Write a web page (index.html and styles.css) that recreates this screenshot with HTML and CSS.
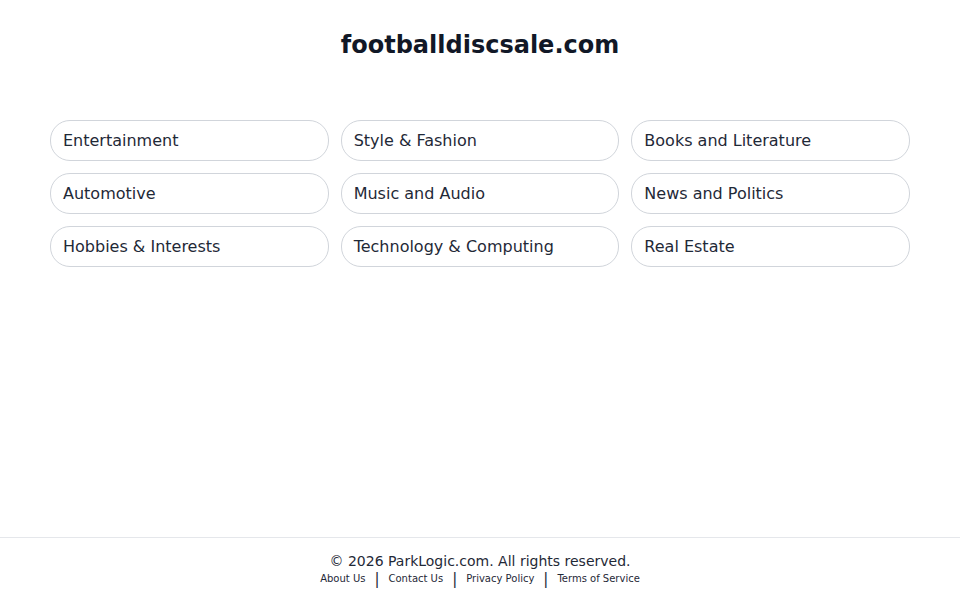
FILE: index.html
```html
<!DOCTYPE html>
<html lang="en">
<head>
<meta charset="utf-8">
<title>footballdiscsale.com</title>
<link rel="stylesheet" href="styles.css">
</head>
<body>
<div class="page">
  <header class="header">
    <h1 class="title">footballdiscsale.com</h1>
  </header>
  <main class="main">
    <div class="grid">
      <a class="pill" href="#">Entertainment</a>
      <a class="pill" href="#">Style &amp; Fashion</a>
      <a class="pill" href="#">Books and Literature</a>
      <a class="pill" href="#">Automotive</a>
      <a class="pill" href="#">Music and Audio</a>
      <a class="pill" href="#">News and Politics</a>
      <a class="pill" href="#">Hobbies &amp; Interests</a>
      <a class="pill" href="#">Technology &amp; Computing</a>
      <a class="pill" href="#">Real Estate</a>
    </div>
  </main>
  <footer class="footer">
    <p class="copy">© 2026 ParkLogic.com. All rights reserved.</p>
    <nav class="links">
      <a href="#">About Us</a><span class="sep">|</span><a href="#">Contact Us</a><span class="sep">|</span><a href="#">Privacy Policy</a><span class="sep">|</span><a href="#">Terms of Service</a>
    </nav>
  </footer>
</div>
</body>
</html>
```
FILE: styles.css
```css
html, body {
  margin: 0;
  padding: 0;
  background: #ffffff;
}
body {
  font-family: "DejaVu Sans", sans-serif;
  color: #1f2937;
}
.page {
  min-height: 100vh;
  display: flex;
  flex-direction: column;
}
.header {
  padding-top: 29px;
  text-align: center;
}
.title {
  margin: 0;
  font-size: 24px;
  line-height: 32px;
  font-weight: bold;
  color: #111827;
}
.main {
  flex: 1;
  padding: 59px 50px 0;
}
.grid {
  display: grid;
  grid-template-columns: repeat(3, 1fr);
  gap: 12px;
}
.pill {
  display: block;
  height: 41px;
  box-sizing: border-box;
  padding: 0 12px;
  border: 1px solid #d1d5db;
  border-radius: 20px;
  font-size: 16px;
  line-height: 39px;
  color: #1f2937;
  text-decoration: none;
  white-space: nowrap;
}
.footer {
  border-top: 1px solid #e5e7eb;
  padding: 13px 0 13px;
  text-align: center;
}
.copy {
  margin: 0;
  font-size: 14px;
  line-height: 20px;
  color: #1f2937;
}
.links {
  display: flex;
  justify-content: center;
  align-items: center;
  font-size: 10px;
  line-height: 16px;
}
.links a {
  color: #1f2937;
  text-decoration: none;
}
.sep {
  font-size: 15px;
  margin: 0 9px;
  color: #1f2937;
}
```
